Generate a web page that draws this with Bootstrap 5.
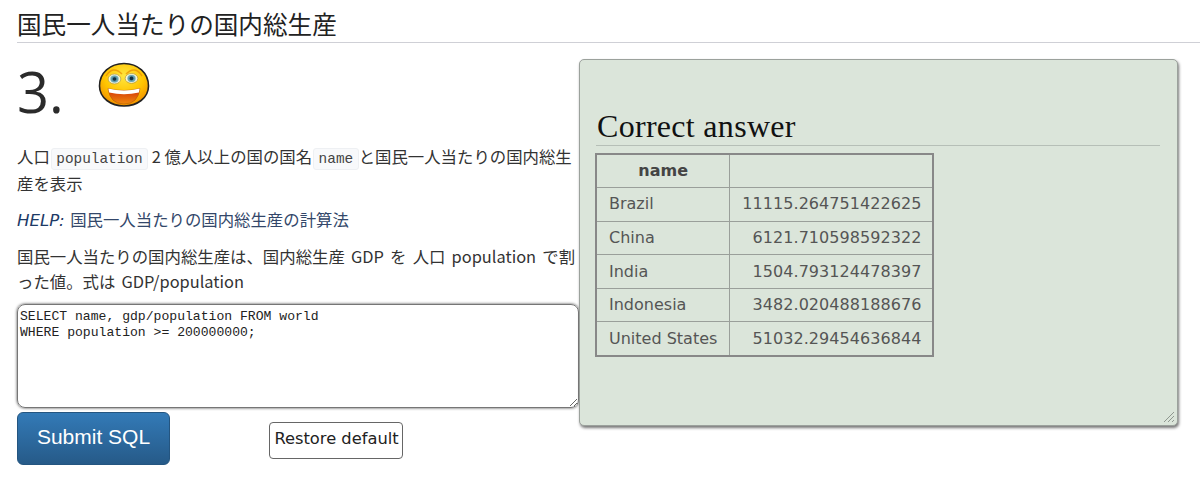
<!DOCTYPE html>
<html lang="ja">
<head>
<meta charset="utf-8">
<title>国民一人当たりの国内総生産</title>
<link href="https://cdn.jsdelivr.net/npm/bootstrap@5.3.0/dist/css/bootstrap.min.css" rel="stylesheet">
<style>
body{background:#fff;color:#333;font-family:"DejaVu Sans","Noto Sans CJK JP",sans-serif;font-size:16px;overflow:hidden;height:481px}
.page-wrap{padding:0 0 0 17px;height:481px;width:1178px}
.topic{font-family:"Liberation Serif","Noto Sans CJK JP",serif;font-size:24.6px;font-weight:400;line-height:30px;margin:11px 0 0;padding-bottom:1px;border-bottom:1px solid #cfd0d6;color:#222;height:32px;width:1183px}
.cols{align-items:flex-start}
.left-col{width:562px;flex:none}
.qhead{height:100px;font-family:"Open Sans",sans-serif;font-weight:400;font-size:56px;line-height:66px;color:#2b2b2b;margin:0;padding-top:15px;display:flex;align-items:flex-start}
.qhead span{width:81px;display:block}
.qhead svg{margin-top:4px}
.txt{font-size:16.4px;line-height:26px;margin:0 0 10px;color:#333;font-family:"Noto Sans CJK JP",sans-serif}
.spaced{word-spacing:2.5px;line-height:25px}
.chip{font-family:"Liberation Mono",monospace;font-size:14.4px;color:#444;background:#f8f9fb;border:1px solid #eef0f3;border-radius:3px;padding:0 4.5px;margin-left:1px;line-height:20px;display:inline-block}
.helpline{color:#33476a;margin-bottom:10px}
.helpline i{color:#1d3a66;font-family:"DejaVu Sans",sans-serif;font-size:16.6px;margin-right:2px}
.sql{display:block;width:562px;height:104px;font-family:"Liberation Mono",monospace;font-size:13.1px;line-height:16px;padding:4px 2px 2px;border:1px solid #767676;border-radius:8px;box-shadow:0 0 3px #444;color:#222;margin-top:10px}
.actions{height:60px;align-items:flex-start;padding-top:1px}
.btn-submit{width:153px;height:53px;margin-top:3px;background:linear-gradient(#337ab7,#265a88);border:1px solid #245580;border-radius:6px;color:#fff;font-family:"Liberation Sans",sans-serif;font-size:21px;padding:0 0 3px}
.btn-submit:hover{background:#265a88;color:#fff}
.btn-restore{width:134px;height:37px;margin:13px 0 0 99px;background:#fff;border:1px solid #666;border-radius:4px;color:#222;font-family:"DejaVu Sans",sans-serif;font-size:16.3px;padding:0 0 2px 1px;white-space:nowrap}
.answer{flex:none;width:599px;height:367px;margin-top:16px;background:#dbe5da;border:1px solid #9ba19c;border-radius:5px;box-shadow:1px 2px 3px #777;padding:0 17px 0 16px;position:relative;z-index:2}
.answer h3{font-family:"Liberation Serif",serif;font-size:32px;letter-spacing:.3px;font-weight:400;color:#111;line-height:36px;margin:48px 0 0;padding-bottom:1px;padding-left:1px;border-bottom:1px solid #b6bfb7;height:38px}
.res{border-collapse:collapse;margin:7px 0 0 -1px;border:2px solid #888;color:#555;font-size:16px}
.res th,.res td{border:1px solid #9a9f9a;padding:0 12px;height:33.6px}
.res th{text-align:center;font-weight:700;color:#444}
.res td:last-child{text-align:right;letter-spacing:.05px;padding-right:11px}
.grip{position:absolute;right:2px;bottom:2px;width:12px;height:12px}
</style>
</head>
<body>
<div class="page-wrap">
<h2 class="topic">国民一人当たりの国内総生産</h2>
<div class="d-flex cols">
<div class="left-col">
<h1 class="qhead"><span>3.</span>
<svg width="52" height="46" viewBox="0 0 52 46" aria-hidden="true">
<defs>
<radialGradient id="f" cx=".5" cy=".3" r=".75"><stop offset="0" stop-color="#ffe640"/><stop offset=".55" stop-color="#ffc400"/><stop offset="1" stop-color="#ee8400"/></radialGradient>
<linearGradient id="m" x1="0" y1="0" x2="0" y2="1"><stop offset="0" stop-color="#d02c08"/><stop offset="1" stop-color="#f08a0e"/></linearGradient>
<radialGradient id="e" cx=".5" cy=".5" r=".55"><stop offset="0" stop-color="#2d6478"/><stop offset="1" stop-color="#86c0cf"/></radialGradient>
</defs>
<path d="M26 1.500 C40 1.500 50.500 11 50.500 24 C50.500 36 39 44 26 44 C13 44 1.500 36 1.500 24 C1.500 11 12 1.500 26 1.500Z" fill="url(#f)" stroke="#222" stroke-width="1.6"/>
<path d="M8 14 Q15 3 24 12 M28 12 Q37 3 44 14" fill="none" stroke="#e88c00" stroke-width="1.5" opacity=".7"/>
<ellipse cx="16.500" cy="17" rx="6.300" ry="4.900" fill="#fdf6d2" stroke="#8a7a30" stroke-width=".5"/>
<ellipse cx="33.500" cy="16.400" rx="6.300" ry="4.900" fill="#fdf6d2" stroke="#8a7a30" stroke-width=".5"/>
<ellipse cx="16.500" cy="17" rx="4.200" ry="3.700" fill="url(#e)"/>
<ellipse cx="33.500" cy="16.400" rx="4.200" ry="3.700" fill="url(#e)"/>
<circle cx="16.500" cy="17" r="1.800" fill="#123040"/>
<circle cx="33.500" cy="16.400" r="1.800" fill="#123040"/>
<path d="M10 26.500 Q26 30.500 42 26.500 Q40 42 26 42 Q12 42 10 26.500Z" fill="url(#m)" stroke="#a85400" stroke-width=".5"/>
<path d="M10.300 26.500 Q26 30.500 41.700 26.500 L40.900 30.500 Q26 34 11.100 30.500Z" fill="#fff"/>
</svg>
</h1>
<p class="txt">人口<code class="chip">population</code> 2 億人以上の国の国名<code class="chip">name</code>と国民一人当たりの国内総生産を表示</p>
<p class="txt helpline"><i>HELP:</i> 国民一人当たりの国内総生産の計算法</p>
<p class="txt spaced mb-0">国民一人当たりの国内総生産は、国内総生産 GDP を 人口 population で割った値。式は GDP/population</p>
<textarea class="sql form-control-plaintext" spellcheck="false">SELECT name, gdp/population FROM world
WHERE population &gt;= 200000000;</textarea>
<div class="d-flex actions">
<button type="button" class="btn btn-submit">Submit SQL</button>
<button type="button" class="btn btn-restore">Restore default</button>
</div>
</div>
<div class="answer">
<h3>Correct answer</h3>
<table class="res">
<thead><tr><th>name</th><th></th></tr></thead>
<tbody>
<tr><td>Brazil</td><td>11115.264751422625</td></tr>
<tr><td>China</td><td>6121.710598592322</td></tr>
<tr><td>India</td><td>1504.793124478397</td></tr>
<tr><td>Indonesia</td><td>3482.020488188676</td></tr>
<tr><td>United States</td><td>51032.29454636844</td></tr>
</tbody>
</table>
<svg class="grip" viewBox="0 0 12 12" aria-hidden="true"><path d="M1 11 L11 1 M5 11 L11 5 M9 11 L11 9" stroke="#8f978f" stroke-width="1" fill="none"/></svg>
</div>
</div>
</div>
<script src="https://cdn.jsdelivr.net/npm/bootstrap@5.3.0/dist/js/bootstrap.bundle.min.js"></script>
</body>
</html>
